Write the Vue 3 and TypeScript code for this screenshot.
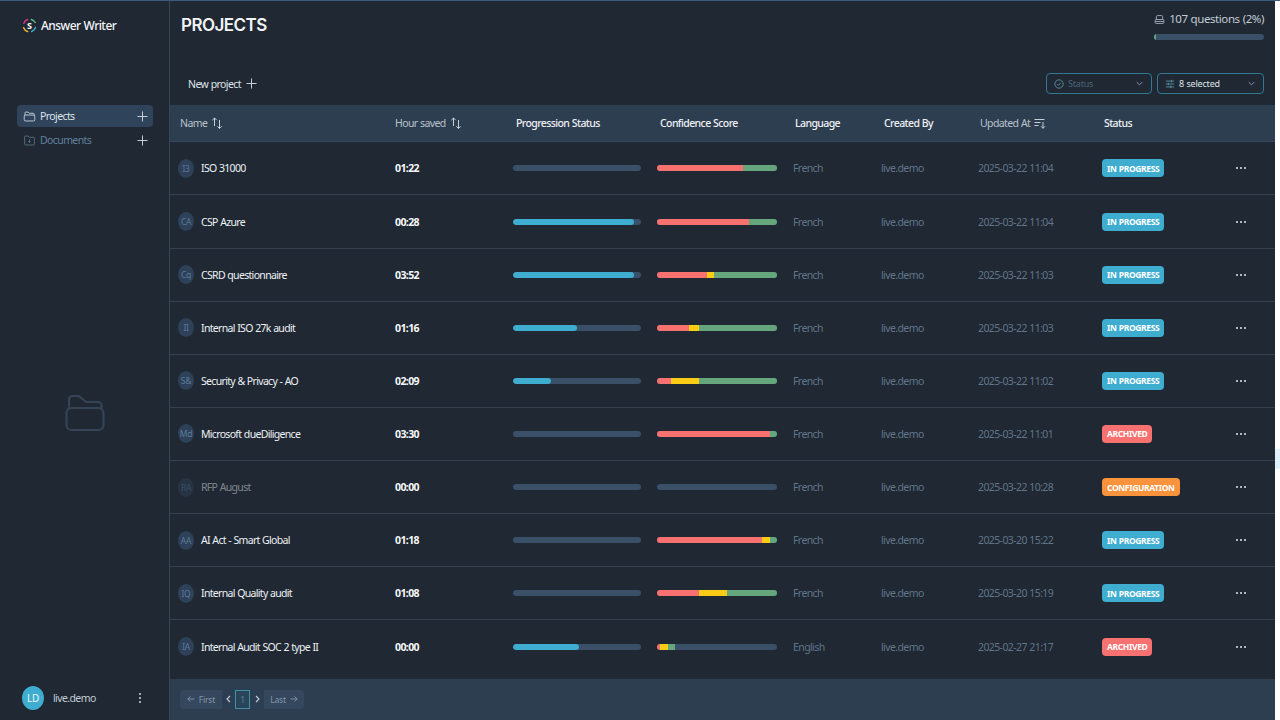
<script setup lang="ts">
interface Row {
  initials: string
  name: string
  saved: string
  progress: number
  red: number
  yellow: number
  green: number
  language: string
  updated: string
  status: 'IN PROGRESS' | 'ARCHIVED' | 'CONFIGURATION'
  dim?: boolean
}

const rows: Row[] = [
  { initials: 'I3', name: 'ISO 31000', saved: '01:22', progress: 0, red: 86, yellow: 0, green: 34, language: 'French', updated: '2025-03-22 11:04', status: 'IN PROGRESS' },
  { initials: 'CA', name: 'CSP Azure', saved: '00:28', progress: 121, red: 92, yellow: 0, green: 28, language: 'French', updated: '2025-03-22 11:04', status: 'IN PROGRESS' },
  { initials: 'Cq', name: 'CSRD questionnaire', saved: '03:52', progress: 121, red: 50, yellow: 7, green: 63, language: 'French', updated: '2025-03-22 11:03', status: 'IN PROGRESS' },
  { initials: 'II', name: 'Internal ISO 27k audit', saved: '01:16', progress: 64, red: 32, yellow: 10, green: 78, language: 'French', updated: '2025-03-22 11:03', status: 'IN PROGRESS' },
  { initials: 'S&', name: 'Security & Privacy - AO', saved: '02:09', progress: 38, red: 14, yellow: 28, green: 78, language: 'French', updated: '2025-03-22 11:02', status: 'IN PROGRESS' },
  { initials: 'Md', name: 'Microsoft dueDiligence', saved: '03:30', progress: 0, red: 113, yellow: 0, green: 7, language: 'French', updated: '2025-03-22 11:01', status: 'ARCHIVED' },
  { initials: 'RA', name: 'RFP August', saved: '00:00', progress: 0, red: 0, yellow: 0, green: 0, language: 'French', updated: '2025-03-22 10:28', status: 'CONFIGURATION', dim: true },
  { initials: 'AA', name: 'AI Act - Smart Global', saved: '01:18', progress: 0, red: 105, yellow: 8, green: 7, language: 'French', updated: '2025-03-20 15:22', status: 'IN PROGRESS' },
  { initials: 'IQ', name: 'Internal Quality audit', saved: '01:08', progress: 0, red: 42, yellow: 28, green: 50, language: 'French', updated: '2025-03-20 15:19', status: 'IN PROGRESS' },
  { initials: 'IA', name: 'Internal Audit SOC 2 type II', saved: '00:00', progress: 66, red: 3, yellow: 8, green: 7, language: 'English', updated: '2025-02-27 21:17', status: 'ARCHIVED' }
]

const statusClass = (s: Row['status']): string =>
  s === 'IN PROGRESS' ? 'tag-blue' : s === 'ARCHIVED' ? 'tag-red' : 'tag-orange'
</script>

<template>
  <div class="page">
    <aside class="sidebar">
      <div class="brand">
        <svg class="logo" viewBox="0 0 20 20" fill="none" stroke-width="2" stroke-linecap="round">
          <path d="M2.500 7 A8 8 0 0 1 7.500 2" stroke="#d63384" />
          <path d="M12.500 2 A8 8 0 0 1 17.500 6" stroke="#59b98a" />
          <path d="M18 12.500 A8 8 0 0 1 13 18" stroke="#3eadcf" />
          <path d="M7.500 18 A8 8 0 0 1 2.200 13" stroke="#f2b632" />
          <text x="10" y="14.500" text-anchor="middle" class="logo-s">S</text>
        </svg>
        <span class="brand-name">Answer Writer</span>
      </div>

      <nav class="nav">
        <div class="nav-item active">
          <svg class="nav-icon" viewBox="0 0 16 16" fill="none" stroke="currentColor" stroke-width="1.100" stroke-linejoin="round">
            <path d="M2.500 7V3.500a1 1 0 0 1 1-1h2.700l1.600 1.500h4.700a1 1 0 0 1 1 1V7" />
            <rect x="1.500" y="6.200" width="13" height="7.300" rx="1.400" />
          </svg>
          <span class="nav-label">Projects</span>
          <svg class="plus" viewBox="0 0 12 12" stroke="currentColor" stroke-width="1"><path d="M6 .5v11M.5 6h11" /></svg>
        </div>
        <div class="nav-item">
          <svg class="nav-icon muted-icon" viewBox="0 0 16 16" fill="none" stroke="currentColor" stroke-width="1.100" stroke-linejoin="round">
            <path d="M2 3.500a1 1 0 0 1 1-1h3.200l1.400 1.500H13a1 1 0 0 1 1 1v7.500a1 1 0 0 1-1 1H3a1 1 0 0 1-1-1z" />
            <path d="M8 6.500v4M6.300 9 8 10.700 9.700 9" />
          </svg>
          <span class="nav-label muted">Documents</span>
          <svg class="plus" viewBox="0 0 12 12" stroke="currentColor" stroke-width="1"><path d="M6 .5v11M.5 6h11" /></svg>
        </div>
      </nav>

      <div class="empty">
        <svg viewBox="0 0 40 40" width="40" height="40" fill="none" stroke="#344456" stroke-width="2.200" stroke-linejoin="round">
          <path d="M4 17V6.500a3.500 3.500 0 0 1 3.500-3.500H14l7 6h12a3.500 3.500 0 0 1 3.500 3.500V17" />
          <rect x="1.500" y="15" width="37" height="22" rx="5" />
        </svg>
      </div>

      <div class="user">
        <span class="user-avatar">LD</span>
        <span class="user-name">live.demo</span>
        <svg class="kebab" viewBox="0 0 4 12" width="4" height="12" fill="#cfd6de">
          <circle cx="2" cy="2" r="1" /><circle cx="2" cy="6" r="1" /><circle cx="2" cy="10" r="1" />
        </svg>
      </div>
    </aside>

    <main class="main">
      <header class="top">
        <h1 class="title">PROJECTS</h1>
        <div class="quota">
          <div class="quota-text">
            <svg class="quota-icon" viewBox="0 0 14 14" fill="none" stroke="#aab4c0" stroke-width="1.100" stroke-linejoin="round">
              <path d="M3 7V3.500A1.500 1.500 0 0 1 4.500 2h5A1.500 1.500 0 0 1 11 3.500V7" />
              <rect x="1.500" y="7" width="11" height="5" rx="1.200" />
              <path d="M1.500 9.500h11" />
            </svg>
            <span>107 questions (2%)</span>
          </div>
          <div class="quota-bar"><div class="quota-fill"></div></div>
        </div>
      </header>

      <div class="toolbar">
        <div class="new-project">
          <span>New project</span>
          <svg class="plus" viewBox="0 0 12 12" stroke="currentColor" stroke-width="1"><path d="M6 .5v11M.5 6h11" /></svg>
        </div>
        <div class="filters">
          <div class="select select-status">
            <svg class="select-icon" viewBox="0 0 12 12" fill="none" stroke="#5f9bb0" stroke-width="1">
              <circle cx="6" cy="6" r="5" /><path d="M3.800 6.100 5.300 7.600 8.200 4.600" />
            </svg>
            <span class="select-label placeholder">Status</span>
            <svg class="chev" viewBox="0 0 10 6" fill="none" stroke="#8da0b3" stroke-width="1.300"><path d="M1 1l4 4 4-4" /></svg>
          </div>
          <div class="select select-columns">
            <svg class="select-icon" viewBox="0 0 12 12" fill="none" stroke="#5f9bb0" stroke-width="1">
              <path d="M1 2.500h10M1 6h10M1 9.500h10" /><path d="M7.500 1v3M4 4.500v3M7 8v3" />
            </svg>
            <span class="select-label">8 selected</span>
            <svg class="chev" viewBox="0 0 10 6" fill="none" stroke="#8da0b3" stroke-width="1.300"><path d="M1 1l4 4 4-4" /></svg>
          </div>
        </div>
      </div>

      <div class="table">
        <div class="head grid">
          <div class="th th-name">
            <span>Name</span>
            <svg class="sort" viewBox="0 0 12 12" fill="none" stroke="#c6cfd8" stroke-width="1"><path d="M3.500 9V1M1.300 3.200 3.500 1l2.200 2.200M8.500 3v8.500M6.300 9.300l2.200 2.200 2.200-2.200" /></svg>
          </div>
          <div class="th th-hour">
            <span>Hour saved</span>
            <svg class="sort" viewBox="0 0 12 12" fill="none" stroke="#c6cfd8" stroke-width="1"><path d="M3.500 9V1M1.300 3.200 3.500 1l2.200 2.200M8.500 3v8.500M6.300 9.300l2.200 2.200 2.200-2.200" /></svg>
          </div>
          <div class="th th-wide strong">Progression Status</div>
          <div class="th th-wide strong">Confidence Score</div>
          <div class="th strong">Language</div>
          <div class="th th-wide strong">Created By</div>
          <div class="th">
            <span>Updated At</span>
            <svg class="sort" viewBox="0 0 12 12" fill="none" stroke="#c6cfd8" stroke-width="1"><path d="M.5 2.500h10M.5 5.500h6M.5 8.500h4M9 5v6.300M7 9.300l2 2 2-2" /></svg>
          </div>
          <div class="th strong">Status</div>
          <div class="th"></div>
        </div>

        <div class="body">
          <div v-for="row in rows" :key="row.name" class="row grid">
            <div class="td td-name" :class="{ dim: row.dim }">
              <span class="avatar">{{ row.initials }}</span>
              <span class="name">{{ row.name }}</span>
            </div>
            <div class="td td-hour">{{ row.saved }}</div>
            <div class="td">
              <div class="bar progress-bar">
                <div class="bar-fill" :style="{ width: row.progress + 'px' }"></div>
              </div>
            </div>
            <div class="td">
              <div class="bar conf-bar">
                <div class="seg seg-red" :style="{ width: row.red + 'px' }"></div>
                <div class="seg seg-yellow" :style="{ width: row.yellow + 'px' }"></div>
                <div class="seg seg-green" :style="{ width: row.green + 'px' }"></div>
              </div>
            </div>
            <div class="td soft">{{ row.language }}</div>
            <div class="td soft">live.demo</div>
            <div class="td soft">{{ row.updated }}</div>
            <div class="td"><span class="tag" :class="statusClass(row.status)">{{ row.status }}</span></div>
            <div class="td td-menu">
              <svg viewBox="0 0 10 2" width="10" height="2" fill="#dfe4ea">
                <circle cx="1" cy="1" r="1" /><circle cx="5" cy="1" r="1" /><circle cx="9" cy="1" r="1" />
              </svg>
            </div>
          </div>
        </div>

        <footer class="pager-bar">
          <div class="pager">
            <div class="pg pg-first">
              <svg class="pg-arrow" viewBox="0 0 8 8" fill="none" stroke="currentColor" stroke-width="0.900"><path d="M7.500 4H.8M3.500 1.300.8 4l2.700 2.700" /></svg>
              <span>First</span>
            </div>
            <div class="pg pg-step">
              <svg class="pg-chev" viewBox="0 0 5 8" fill="none" stroke="currentColor" stroke-width="1.100"><path d="M4 1 1 4l3 3" /></svg>
            </div>
            <div class="pg pg-current">1</div>
            <div class="pg pg-step pg-next">
              <svg class="pg-chev" viewBox="0 0 5 8" fill="none" stroke="currentColor" stroke-width="1.100"><path d="m1 1 3 3-3 3" /></svg>
            </div>
            <div class="pg pg-last">
              <span>Last</span>
              <svg class="pg-arrow" viewBox="0 0 8 8" fill="none" stroke="currentColor" stroke-width="0.900"><path d="M.5 4h6.700M4.500 1.300 7.200 4 4.500 6.700" /></svg>
            </div>
          </div>
        </footer>
      </div>
    </main>

    <div class="rail"><div class="rail-mark"></div></div>
  </div>
</template>

<style>
html, body { margin: 0; background: #fff; overflow: hidden; }
</style>

<style scoped>
.page {
  display: flex;
  width: 1280px;
  height: 720px;
  box-sizing: border-box;
  border-top: 1px solid #3a5a80;
  background: #1f2833;
  color: #e8ecf0;
  font-family: "Noto Sans", sans-serif;
  font-size: 10.500px;
  letter-spacing: -0.6px;
  word-spacing: 0.4px;
  overflow: hidden;
}
.sidebar {
  width: 170px;
  flex: none;
  box-sizing: border-box;
  border-right: 1px solid #35465a;
  display: flex;
  flex-direction: column;
  padding: 0 16px 0 17px;
}
.brand {
  display: flex;
  align-items: center;
  gap: 4px;
  height: 49px;
  padding-left: 5px;
}
.logo { width: 15px; height: 15px; flex: none; }
.logo-s { font-size: 12px; font-weight: 700; fill: #fff; stroke: none; font-family: "Noto Sans", sans-serif; letter-spacing: 0; }
.brand-name { font-size: 12px; font-weight: 500; color: #f2f4f6; letter-spacing: -0.55px; }
.nav { margin-top: 55px; display: flex; flex-direction: column; gap: 2px; }
.nav-item {
  display: flex;
  align-items: center;
  height: 22px;
  padding: 0 5px 0 6px;
  border-radius: 4px;
  gap: 4px;
}
.nav-item.active { background: #2f435a; }
.nav-icon { width: 13px; height: 13px; color: #c9d2dc; flex: none; }
.muted-icon { color: #5a7085; }
.nav-label { flex: 1; color: #dde3e9; }
.nav-label.muted { color: #62809d; }
.plus { width: 11px; height: 11px; color: #d4dae0; flex: none; }
.empty { flex: 1; display: flex; align-items: center; justify-content: center; }
.user { display: flex; align-items: center; height: 46px; padding: 1px 11px 0 5px; box-sizing: border-box; }
.user-avatar {
  width: 22px;
  height: 24px;
  border-radius: 50%;
  background: #3eadcf;
  color: #eaf6fa;
  font-size: 10px;
  letter-spacing: -0.3px;
  display: flex;
  align-items: center;
  justify-content: center;
  flex: none;
}
.user-name { flex: 1; margin-left: 9px; color: #c3ccd5; }
.kebab { flex: none; }
.main {
  width: 1105px;
  flex: none;
  display: flex;
  flex-direction: column;
  min-width: 0;
}
.top {
  display: flex;
  justify-content: space-between;
  height: 61px;
  padding: 0 11px;
  flex: none;
}
.title {
  margin: 14px 0 0;
  font-family: Inter, "Noto Sans", sans-serif;
  font-size: 17px;
  line-height: 21px;
  font-weight: 600;
  letter-spacing: -0.55px;
  color: #f2f4f6;
}
.quota { width: 110px; padding-top: 10px; }
.quota-text {
  display: flex;
  align-items: center;
  justify-content: flex-end;
  gap: 4px;
  font-size: 11.500px;
  line-height: 16px;
  color: #c3ccd5;
  white-space: nowrap;
  letter-spacing: -0.42px;
}
.quota-icon { width: 11px; height: 11px; flex: none; }
.quota-bar { height: 6px; margin-top: 7px; border-radius: 3px; background: #3a5068; overflow: hidden; }
.quota-fill { width: 2px; height: 100%; background: #5fa88a; }
.toolbar {
  height: 43px;
  flex: none;
  display: flex;
  align-items: flex-start;
  justify-content: space-between;
  padding: 11px 11px 0 18px;
  box-sizing: border-box;
}
.new-project {
  display: flex;
  align-items: center;
  gap: 5px;
  height: 21px;
  color: #dfe4ea;
}
.filters { display: flex; gap: 5px; }
.select {
  display: flex;
  align-items: center;
  height: 21px;
  box-sizing: border-box;
  border: 1px solid #2f7a92;
  border-radius: 4px;
  padding: 0 8px 0 7px;
  gap: 4px;
}
.select-status { width: 106px; }
.select-columns { width: 107px; }
.select-icon { width: 10px; height: 10px; flex: none; }
.chev { width: 7px; height: 5px; flex: none; }
.select-label { flex: 1; font-size: 9px; letter-spacing: -0.2px; color: #dfe4ea; }
.select-label.placeholder { color: #4e6479; }
.table { flex: 1; display: flex; flex-direction: column; min-height: 0; }
.grid {
  display: grid;
  grid-template-columns: 215px 120px 144px 136px 88px 97px 124px 139px 41px;
}
.head {
  height: 37px;
  flex: none;
  background: #2e3e51;
  border-bottom: 1px solid #35485e;
  box-sizing: border-box;
}
.th {
  display: flex;
  align-items: center;
  gap: 4px;
  padding-left: 10px;
  color: #b8c2cc;
}
.th.strong { color: #eef1f4; font-weight: 500; }
.th-wide { padding-left: 11px; }
.sort { width: 12px; height: 12px; flex: none; }
.body { flex: none; margin-top: 0.400px; }
.row {
  height: 53.100px;
  box-sizing: border-box;
  border-bottom: 1px solid #35414e;
}
.row:last-child { border-bottom: 0; }
.td {
  display: flex;
  align-items: center;
  padding-left: 8px;
  min-width: 0;
}
.td-name { gap: 7px; }
.td-name.dim { opacity: 0.45; }
.avatar {
  width: 16px;
  height: 19px;
  border-radius: 50%;
  background: #2e4158;
  color: #5c7b9b;
  font-size: 8.500px;
  letter-spacing: -0.3px;
  display: flex;
  align-items: center;
  justify-content: center;
  flex: none;
}
.name { color: #eef1f4; white-space: nowrap; letter-spacing: -0.68px; }
.td-hour { padding-left: 10px; font-weight: 700; color: #f6f7f9; }
.bar { display: flex; height: 6px; border-radius: 3px; overflow: hidden; background: #3a5068; }
.progress-bar { width: 128px; }
.conf-bar { width: 120px; }
.bar-fill { height: 100%; background: #3eadcf; border-radius: 3px; }
.seg { height: 100%; }
.seg-red { background: #f87171; }
.seg-yellow { background: #facc15; }
.seg-green { background: #65a67c; }
.soft { color: #617589; white-space: nowrap; }
.tag {
  display: inline-flex;
  align-items: center;
  height: 18px;
  padding: 0 5px;
  border-radius: 4px;
  color: #fff;
  font-size: 8.500px;
  font-weight: 700;
  letter-spacing: -0.35px;
  white-space: nowrap;
}
.tag-blue { background: #3eadcf; }
.tag-red { background: #f87171; }
.tag-orange { background: #fb923c; }
.td-menu { padding-left: 3px; }
.pager-bar {
  margin-top: 5.600px;
  flex: 1;
  background: #2e3e51;
  display: flex;
  align-items: center;
  padding-left: 10px;
}
.pager { display: flex; align-items: stretch; height: 19px; border-radius: 4px; overflow: hidden; }
.pg { display: flex; align-items: center; justify-content: center; color: #8297ab; font-size: 8.500px; letter-spacing: -0.2px; gap: 4px; }
.pg-first { width: 42px; background: #34475c; }
.pg-last { width: 40px; background: #34475c; }
.pg-step { width: 13px; background: #2c3e52; color: #c3ccd5; }
.pg-next { width: 14px; }
.pg-current { width: 15px; box-sizing: border-box; border: 1px solid #3e90a8; background: #2a4558; color: #4f88a0; }
.pg-arrow { width: 8px; height: 8px; flex: none; }
.pg-chev { width: 5px; height: 8px; flex: none; }
.rail {
  flex: 1;
  background: #fff;
  padding-top: 448px;
}
.rail-mark { height: 20px; background: #e0f2fe; }
</style>
